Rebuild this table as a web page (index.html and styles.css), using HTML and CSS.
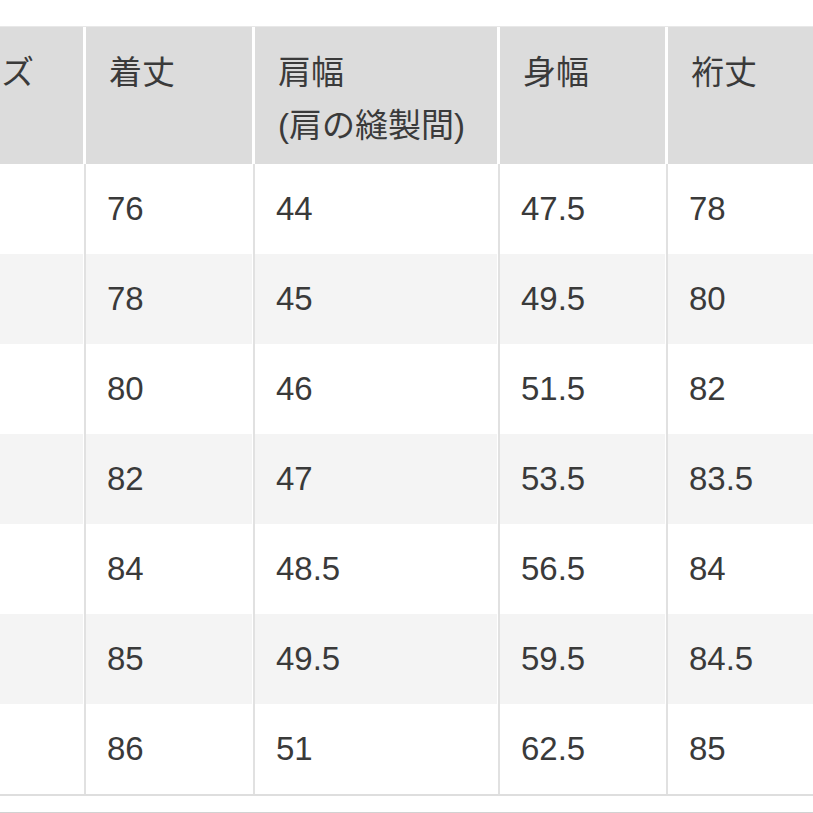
FILE: index.html
```html
<!DOCTYPE html>
<html lang="ja">
<head>
<meta charset="utf-8">
<link rel="stylesheet" href="styles.css">
</head>
<body>
<div class="frame">
  <table class="size-table">
    <colgroup>
      <col class="c1"><col class="c2"><col class="c3"><col class="c4"><col class="c5">
    </colgroup>
    <thead>
      <tr>
        <th>サイズ</th>
        <th>着丈</th>
        <th>肩幅<br>(肩の縫製間)</th>
        <th>身幅</th>
        <th>裄丈</th>
      </tr>
    </thead>
    <tbody>
      <tr><td>XS</td><td>76</td><td>44</td><td>47.5</td><td>78</td></tr>
      <tr><td>S</td><td>78</td><td>45</td><td>49.5</td><td>80</td></tr>
      <tr><td>M</td><td>80</td><td>46</td><td>51.5</td><td>82</td></tr>
      <tr><td>L</td><td>82</td><td>47</td><td>53.5</td><td>83.5</td></tr>
      <tr><td>XL</td><td>84</td><td>48.5</td><td>56.5</td><td>84</td></tr>
      <tr><td>XXL</td><td>85</td><td>49.5</td><td>59.5</td><td>84.5</td></tr>
      <tr><td>3XL</td><td>86</td><td>51</td><td>62.5</td><td>85</td></tr>
    </tbody>
  </table>
  <div class="rule"></div>
</div>
</body>
</html>
```

FILE: styles.css
```css
html, body {
  margin: 0;
  padding: 0;
  background: #ffffff;
}

.frame {
  width: 813px;
  height: 813px;
  overflow: hidden;
  padding-top: 26px;
  box-sizing: border-box;
  font-family: "Liberation Sans", "Noto Sans CJK JP", sans-serif;
  color: #3a3a3a;
}

.size-table {
  margin-left: -86px;
  border-collapse: separate;
  border-spacing: 0;
  table-layout: fixed;
  width: 1070px;
  border-top: 1px solid #e8e8e8;
  border-bottom: 2px solid #dedede;
}

.c1 { width: 169px; }
.c2 { width: 169px; }
.c3 { width: 245px; }
.c4 { width: 168px; }
.c5 { width: 319px; }

.size-table th {
  background: #dcdcdc;
  height: 137px;
  box-sizing: border-box;
  vertical-align: top;
  text-align: left;
  font-weight: normal;
  font-size: 33px;
  line-height: 53px;
  padding: 19px 0 0 23px;
  border-left: 3px solid #ffffff;
}

.size-table th:first-child,
.size-table td:first-child {
  border-left: none;
  padding-left: 22px;
}

.size-table td {
  height: 90px;
  box-sizing: border-box;
  font-size: 33px;
  line-height: 40px;
  padding: 0 0 0 23px;
  vertical-align: middle;
  border-left: 1px solid #ffffff;
  box-shadow: inset 2px 0 0 #e1e1e1;
}

.size-table tbody tr:nth-child(even) td {
  background: #f4f4f4;
}

.rule {
  margin-top: 16px;
  height: 2px;
  background: #d2d2d2;
}
```
